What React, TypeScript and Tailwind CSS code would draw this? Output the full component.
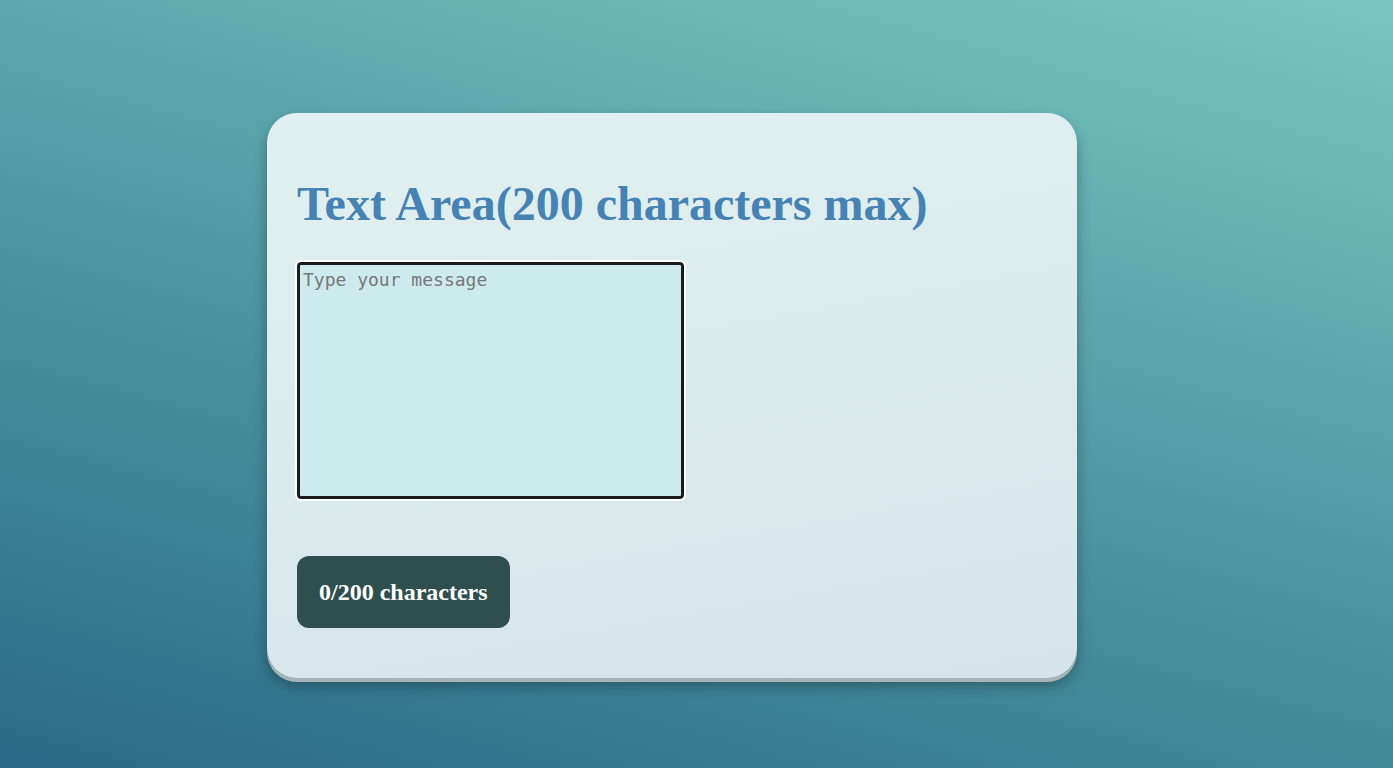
import { useState } from 'react';

export default function App() {
  const [text, setText] = useState('');
  const max = 200;

  return (
    <div className="min-h-screen w-full bg-[linear-gradient(15deg,#2b6a88_0%,#4f98a3_50%,#78c7c0_100%)] pt-[113px] pl-[267px] pb-[86px]">
      <div className="w-[810px] rounded-[30px] bg-[linear-gradient(170deg,#e1f1f1_0%,#d6e4e9_100%)] px-[30px] pt-[30px] pb-[50px] shadow-[0_4px_0_#a6b3b7,0_8px_14px_rgba(0,0,0,0.3)]">
        <h1 className="mt-[33px] mb-[31px] font-['Liberation_Serif',serif] text-[48px] font-bold leading-[55px] text-[#4682b4]">
          Text Area(200 characters max)
        </h1>
        <textarea
          autoFocus
          value={text}
          maxLength={max}
          onChange={(e) => setText(e.target.value)}
          placeholder="Type your message"
          className="block h-[237px] w-[387px] resize-none rounded-[4px] border-[3px] border-[#1c1c1c] bg-[#cdeaec] px-[3px] py-[2px] font-['DejaVu_Sans_Mono',monospace] text-[18px] leading-[25px] text-[#222] outline outline-2 outline-white placeholder:text-[#777]"
        />
        <div className="mt-[57px] inline-flex h-[72px] items-center rounded-[12px] bg-[#2f4f4f] px-[22px] font-['Liberation_Serif',serif] text-[24px] font-bold text-white">
          {text.length}/{max} characters
        </div>
      </div>
    </div>
  );
}
